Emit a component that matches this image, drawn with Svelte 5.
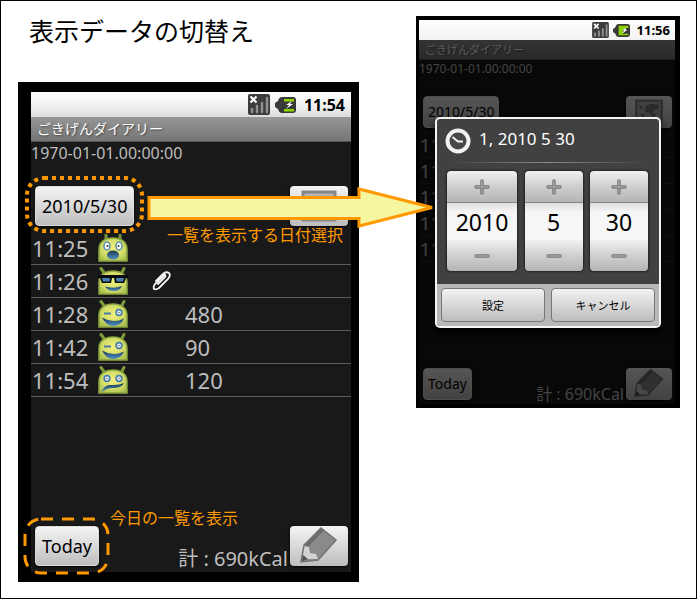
<script>
  const entries = [
    { time: '11:25', mood: 'shock' },
    { time: '11:26', mood: 'cool', clip: true },
    { time: '11:28', mood: 'wink', kcal: 480 },
    { time: '11:42', mood: 'wink', kcal: 90 },
    { time: '11:54', mood: 'sad', kcal: 120 }
  ];
  const pickers = [
    { name: '年', value: '2010', wide: true },
    { name: '月', value: '5' },
    { name: '日', value: '30' }
  ];
</script>

{#snippet face(mood)}
  <svg class="face" viewBox="0 0 30 28" aria-hidden="true">
    {#if mood === 'shock'}
      <path d="M8 7V0M22 7V0" stroke="#76913a" stroke-width="3" />
    {:else}
      <path d="M7 7L3 1.500M23 7L26 1.500" stroke="#7f9c3c" stroke-width="3" stroke-linecap="round" />
    {/if}
    <path d="M1 27V15C1 8 7 4 15 4S29 8 29 15V27Z" fill="url(#skin)" stroke="#8ba640" stroke-width="1.500" />
    {#if mood === 'shock'}
      <ellipse cx="9" cy="12" rx="3" ry="4" fill="#fff" stroke="#5b8fae" stroke-width="1.600" />
      <ellipse cx="21" cy="12" rx="3" ry="4" fill="#fff" stroke="#5b8fae" stroke-width="1.600" />
      <circle cx="9.500" cy="12" r="1" fill="#235" /><circle cx="20.500" cy="12" r="1" fill="#235" />
      <ellipse cx="15" cy="21" rx="6" ry="4.600" fill="url(#mouth)" />
    {:else if mood === 'cool'}
      <path d="M0 8H30V11H28L26 16H17L16 11H14L13 16H4L2 11H0Z" fill="#080c0c" />
      <path d="M4 11H12L11.500 14.500H5ZM18 11H26L25 14.500H18.500Z" fill="#477fad" />
      <path d="M7 19.500Q16 22 24 19Q22 24 16 24Q10 24 7 19.500Z" fill="url(#mouth)" />
    {:else if mood === 'wink'}
      <path d="M6 13.500H13" stroke="#467ca2" stroke-width="2" />
      <circle cx="21" cy="12.500" r="2.800" fill="#fff" stroke="#467fae" stroke-width="1.800" />
      <circle cx="21" cy="12.500" r=".7" fill="#346" />
      <path d="M4 17.500Q15 24 26 18.500Q23 26 15 26Q8 26 4 17.500Z" fill="url(#mouth)" />
    {:else}
      <circle cx="9" cy="12.500" r="2.800" fill="#fff" stroke="#467fae" stroke-width="1.800" />
      <circle cx="21" cy="12.500" r="2.800" fill="#fff" stroke="#467fae" stroke-width="1.800" />
      <circle cx="9" cy="12.500" r=".7" fill="#346" /><circle cx="21" cy="12.500" r=".7" fill="#346" />
      <path d="M4 26C5 20 10 18.500 15 19C20 19 23 18 26 17C24 21 20 22 15 22C10 22 6 24 4 26Z" fill="url(#mouth)" />
    {/if}
  </svg>
{/snippet}

{#snippet statusBar(time, full)}
  <div class="status">
    <svg class="signal" viewBox="0 0 22 21" aria-hidden="true">
      <rect width="22" height="21" rx="2" fill="#3c3d3c" />
      <path d="M4 18V15M9 18V12M14 18V9M19 18V4" stroke="#909290" stroke-width="2.400" stroke-linecap="round" />
      <path d="M2.500 2.500L8.500 8.500M8.500 2.500L2.500 8.500" stroke="#fff" stroke-width="2.200" />
    </svg>
    <svg class="battery" viewBox="0 0 21 16" aria-hidden="true">
      <path d="M3 4Q4 0 7 0H18Q21 0 21 3V13Q21 16 18 16H7Q4 16 3 12L0 10V6Z" fill="#383a38" />
      {#if full}
        <path d="M7 2H19V5H16L11 8L13 9L12 12H19V14H7Z" fill="#8fd400" />
      {:else}
        <path d="M9 2H19V4.500H9ZM9 12H19V14.500H9Z" fill="#8fd400" />
      {/if}
      <path d="M17 4L11 8H14L11 12L18 7H15Z" fill="#fff" />
    </svg>
    <time>{time}</time>
  </div>
{/snippet}

{#snippet diary()}
  <p class="stamp">1970-01-01.00:00:00</p>
  <div class="bar">
    <button class="key">2010/5/30</button>
    <button class="key icon" aria-label="グラフ">
      <svg viewBox="0 0 58 40" aria-hidden="true">
        <rect x="13" y="6" width="32" height="28" fill="#b4b6b4" stroke="#858785" stroke-width="3" />
        <path d="M17 13h4v3h-4zM19 22h4v4h-4zM26 12l6-2 9 1v5l-5 1-3 4 5 2-3 6-3-5-4-4-3 1-1-5zM37 27h4v3h-4z" fill="#777977" />
      </svg>
    </button>
  </div>
  <ul>
    {#each entries as e}
      <li>
        <span class="at">{e.time}</span>
        {@render face(e.mood)}
        <span class="attach">
          {#if e.clip}
            <svg viewBox="0 0 20 20" aria-label="添付">
              <path d="M7 13L14 6Q15 5 14 4Q13 4 12 5L4 13Q2 16 3 18Q5 19 8 17L17 8Q20 4 18 2Q15 0 12 3L5 10" fill="none" stroke="#f4f4f4" stroke-width="1.800" stroke-linecap="round" />
            </svg>
          {/if}
        </span>
        <span>{e.kcal ?? ''}</span>
      </li>
    {/each}
  </ul>
  <div class="bar foot">
    <button class="key">Today</button>
    <span class="total">計 : 690kCal</span>
    <button class="key icon" aria-label="編集">
      <svg viewBox="0 0 58 40" aria-hidden="true">
        <path d="M11 36L14 19L31 2L46 14L28 34Z" fill="#8a8a8a" />
        <path d="M14 19L31 2L34 4L18 21Z" fill="#6b6b6b" />
        <path d="M12 35L14 20L19 21L20 27L26 28L28 33L18 33Z" fill="#d2d2d2" />
        <path d="M11 36L13 29L18 33Z" fill="#555" />
        <path d="M11 36L14 19L31 2L46 14L28 34Z" fill="none" stroke="#737373" stroke-width="1.500" />
      </svg>
    </button>
  </div>
{/snippet}

<main>
  <svg class="defs" aria-hidden="true">
    <defs>
      <radialGradient id="skin" cy=".45" r=".65">
        <stop offset="0" stop-color="#f4f07c" /><stop offset=".6" stop-color="#d3dc68" /><stop offset="1" stop-color="#a5bb4b" />
      </radialGradient>
      <linearGradient id="mouth" x2="0" y2="1">
        <stop offset="0" stop-color="#20384e" /><stop offset="1" stop-color="#4f92c8" />
      </linearGradient>
    </defs>
  </svg>

  <div class="left">
    <h1>表示データの切替え</h1>
    <section class="phone">
      {@render statusBar('11:54', false)}
      <h2>ごきげんダイアリー</h2>
      <div class="body">{@render diary()}</div>
    </section>
  </div>

  <section class="phone small">
    {@render statusBar('11:56', true)}
    <div class="dimmed">
      <h2>ごきげんダイアリー</h2>
      <div class="body">{@render diary()}</div>
    </div>
    <div class="dialog" role="dialog" aria-labelledby="dlg">
      <header>
        <svg viewBox="0 0 26 26" aria-hidden="true">
          <circle cx="13" cy="13" r="10.500" fill="#484848" stroke="#f2f2f2" stroke-width="4" />
          <path d="M7.500 9L13 13.500H18" fill="none" stroke="#f2f2f2" stroke-width="2" />
        </svg>
        <h3 id="dlg">1, 2010 5 30</h3>
      </header>
      <div class="pickers">
        {#each pickers as p}
          <div class="picker" class:wide={p.wide}>
            <button aria-label="{p.name}を増やす">
              <svg viewBox="0 0 16 16" aria-hidden="true"><path d="M8 2V14M2 8H14" stroke="#777" stroke-width="3.500" stroke-linecap="round" /><path d="M8 2V14M2 8H14" stroke="#a2a2a2" stroke-width="1.500" stroke-linecap="round" /></svg>
            </button>
            <input value={p.value} aria-label={p.name} />
            <button aria-label="{p.name}を減らす">
              <svg viewBox="0 0 16 16" aria-hidden="true"><path d="M2 8H14" stroke="#777" stroke-width="3.500" stroke-linecap="round" /><path d="M2 8H14" stroke="#a2a2a2" stroke-width="1.500" stroke-linecap="round" /></svg>
            </button>
          </div>
        {/each}
      </div>
      <footer><button>設定</button><button>キャンセル</button></footer>
    </div>
  </section>

  <svg class="marks" width="440" height="580" viewBox="0 0 440 580" aria-hidden="true">
    <rect x="26" y="177" width="115" height="53" rx="17" fill="none" stroke="#f90" stroke-width="4" stroke-dasharray="4 4" />
    <rect x="24" y="518" width="83" height="54" rx="16" fill="none" stroke="#f90" stroke-width="3" stroke-dasharray="12 9" />
    <path d="M148 196.500H358V188L431 206.500L358 225V217.500H148Z" fill="#f7f6a0" stroke="#f90" stroke-width="3" />
  </svg>
  <p class="note pick">一覧を表示する日付選択</p>
  <p class="note today">今日の一覧を表示</p>
</main>

<style>
  :global(body) { margin: 0; background: #fff; }
  main, main * { box-sizing: border-box; }
  main {
    position: relative;
    display: flex;
    align-items: flex-start;
    gap: 57px;
    min-height: 100vh;
    padding: 15px 16px 16px 17px;
    border: 1px solid #000;
    font-family: "Noto Sans", "Noto Sans CJK JP", sans-serif;
  }
  h1, h2, h3, p, ul { margin: 0; padding: 0; font-weight: 400; }
  svg { display: block; }
  button, input { font: inherit; padding: 0; margin: 0; }
  .defs { position: absolute; width: 0; height: 0; }
  h1 {
    height: 66px;
    padding-left: 11px;
    font: 25px/28px "Noto Sans CJK JP", sans-serif;
    color: #000;
  }

  .phone {
    --text: 22px;
    --note: 16px;
    --button: 18px;
    --total: 20px;
    --title: 14px;
    --bar: 25px;
    --row: 33px;
    --key: 40px;
    --key-pad: 6px;
    --icon: 58px;
    --time: 66px;
    --face: 30px;
    --clip: 57px;
    --list: 46px;
    position: relative;
    flex: none;
    display: flex;
    flex-direction: column;
    width: 341px;
    min-height: 500px;
    padding: 10px 8px 10px 13px;
    background: #000;
  }
  .small {
    --text: 18px;
    --note: 12px;
    --button: 14px;
    --total: 16px;
    --title: 11px;
    --bar: 20px;
    --row: 26px;
    --key: 32px;
    --key-pad: 4px;
    --icon: 46px;
    --time: 53px;
    --face: 24px;
    --clip: 46px;
    --list: 36px;
    width: 264px;
    min-height: 392px;
    padding: 4px 5px 4px 3px;
  }
  .status {
    display: flex;
    align-items: center;
    justify-content: flex-end;
    gap: 5px;
    height: var(--bar);
    padding-right: 6px;
    background: linear-gradient(#fff, #eee 60%, #dcdcdc);
    color: #000;
  }
  .signal { width: 22px; height: 21px; }
  .battery { width: 21px; height: 16px; }
  .status time { margin-left: 3px; font-size: 16px; font-weight: 700; line-height: 24px; }
  .small .status { background: linear-gradient(#fff, #f2f2f2); gap: 4px; padding-right: 5px; }
  .small .signal { width: 17px; height: 16px; }
  .small .battery { width: 17px; height: 13px; }
  .small .status time { font-size: 13px; line-height: 20px; }
  h2 {
    height: var(--bar);
    padding-left: 6px;
    border-bottom: 1px solid #555;
    background: linear-gradient(#969696, #767676);
    color: #fff;
    font: var(--title)/22px "Noto Sans CJK JP", sans-serif;
    text-shadow: 1px 1px 2px #444;
  }
  .small h2 { line-height: 18px; }
  .body, .dimmed { flex: 1; display: flex; flex-direction: column; }
  .body { background: #191919; color: #bebebe; }
  .dimmed { position: relative; }
  .dimmed::after { content: ""; position: absolute; inset: 0; background: rgba(0, 0, 0, .65); }
  .stamp { height: 44px; font-size: var(--note); line-height: 22px; }
  .small .stamp { height: 36px; line-height: 18px; }
  .bar { display: flex; align-items: flex-start; justify-content: space-between; height: var(--list); padding: 0 3px 0 4px; }
  .key {
    height: var(--key);
    padding: 0 var(--key-pad);
    border: 1px solid #ddd;
    border-radius: 4px;
    background: linear-gradient(#f4f4f4, #d9d9da 50%, #bdbdbe);
    box-shadow: 0 1px 3px #000;
    color: #000;
    font-size: var(--button);
    line-height: 24px;
  }
  .icon { width: var(--icon); padding: 0; border: 0; overflow: hidden; }
  .icon svg { width: 100%; }
  ul { list-style: none; }
  li {
    display: flex;
    align-items: center;
    height: var(--row);
    padding-left: 1px;
    border-bottom: 1px solid #5c5c5c;
    font-size: var(--text);
    line-height: 26px;
  }
  .at { width: var(--time); }
  .face { width: var(--face); height: 28px; }
  .attach { width: var(--clip); padding-left: 23px; }
  .attach svg { width: 20px; height: 20px; }
  .small .attach { padding-left: 18px; }
  .small li { border-color: #2c2c2c; }
  .foot { margin-top: auto; }
  .foot .total { align-self: flex-end; margin: 0 2px 0 auto; font-size: var(--total); line-height: 26px; }
  .small .foot .total { line-height: 20px; }

  .dialog {
    position: absolute;
    top: 101px;
    left: 19px;
    width: 226px;
    border: 2px solid #f4f4f4;
    border-radius: 5px;
    background: #414141;
    box-shadow: 0 5px 6px #000;
    overflow: hidden;
  }
  .dialog header { display: flex; align-items: center; gap: 8px; height: 43px; padding-left: 8px; }
  .dialog header svg { width: 26px; height: 26px; }
  .dialog h3 { color: #fff; font-size: 17px; line-height: 24px; padding-bottom: 3px; }
  .pickers {
    display: flex;
    justify-content: space-between;
    padding: 9px 11px 13px 10px;
    background: linear-gradient(90deg, #414141, #8a8a8a, #414141) top / 90% 1px no-repeat;
  }
  .picker {
    display: flex;
    flex-direction: column;
    width: 58px;
    border-radius: 4px;
    overflow: hidden;
    box-shadow: 0 0 2px 1px #222;
  }
  .wide { width: 70px; }
  .picker button {
    display: grid;
    place-items: center;
    height: 31px;
    border: 0;
    background: linear-gradient(#f0f0f0, #cfcfcf 50%, #b4b4b4);
  }
  .picker svg { width: 16px; height: 16px; }
  .picker input {
    width: 100%;
    height: 38px;
    border: 0;
    border-top: 1px solid #888;
    background: linear-gradient(#dedede, #f6f6f6 25%, #f6f6f6);
    color: #000;
    font-size: 23px;
    text-align: center;
  }
  .dialog footer { display: flex; gap: 6px; padding: 4px; background: #b9b7b9; }
  .dialog footer button {
    flex: 1;
    height: 34px;
    border: 1px solid #777;
    border-radius: 4px;
    background: linear-gradient(#f2f2f2, #d8d8d8 50%, #bdbdbd);
    color: #000;
    font: 11px/16px "Noto Sans CJK JP", sans-serif;
  }

  .marks { position: absolute; top: 0; left: 0; }
  .note { position: absolute; color: #f90; font: 16px/20px "Noto Sans CJK JP", sans-serif; }
  .pick { top: 223px; left: 166px; }
  .today { top: 506px; left: 109px; }
</style>
